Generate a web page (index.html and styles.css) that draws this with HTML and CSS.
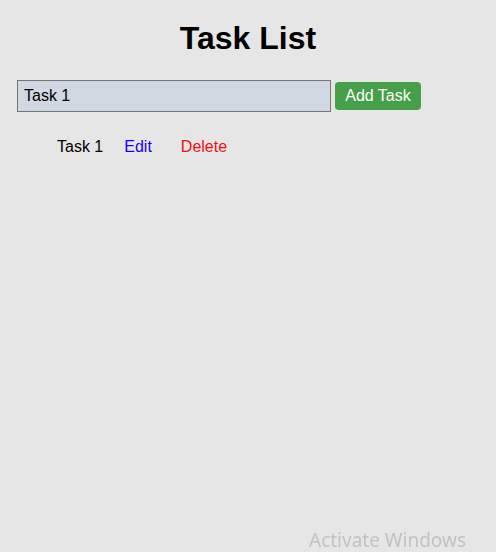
FILE: index.html
```html
<!DOCTYPE html>
<html>
<head>
<meta charset="utf-8">
<link rel="stylesheet" href="styles.css">
</head>
<body>
<div class="app">
  <h1 class="title">Task List</h1>
  <div class="form">
    <input class="task-input" type="text" value="Task 1">
    <button class="add-btn">Add Task</button>
  </div>
  <ul class="tasks">
    <li class="task">
      <span class="task-name">Task 1</span>
      <span class="edit">Edit</span>
      <span class="delete">Delete</span>
    </li>
  </ul>
</div>
<div class="watermark">Activate Windows</div>
</body>
</html>
```
FILE: styles.css
```css
html, body {
  margin: 0;
  padding: 0;
  background: #e6e6e6;
  font-family: "Liberation Sans", Arial, sans-serif;
  height: 100%;
}
.app {
  padding: 0 17px;
}
.title {
  margin: 20px 0 0;
  font-size: 32px;
  line-height: 37px;
  font-weight: bold;
  text-align: center;
  color: #000;
}
.form {
  display: flex;
  align-items: center;
  margin-top: 23px;
}
.task-input {
  box-sizing: border-box;
  width: 314px;
  height: 32px;
  border: 1px solid #767676;
  background: #d1d8e3;
  padding: 0 6px;
  font-family: "Liberation Sans", Arial, sans-serif;
  font-size: 16px;
  color: #000;
  margin: 0;
}
.add-btn {
  box-sizing: border-box;
  margin-left: 4px;
  height: 28px;
  width: 86px;
  padding: 0;
  border: none;
  border-radius: 4px;
  background: #45a049;
  color: #fff;
  font-family: "Liberation Sans", Arial, sans-serif;
  font-size: 16px;
}
.tasks {
  list-style: none;
  margin: 26px 0 0;
  padding-left: 40px;
}
.task {
  display: flex;
  align-items: center;
  font-size: 16px;
  line-height: 18px;
}
.task-name {
  color: #000;
}
.edit {
  color: #1a00f0;
  margin-left: 21px;
}
.delete {
  color: #f01010;
  margin-left: 29px;
}
.watermark {
  position: fixed;
  left: 309px;
  top: 531px;
  font-family: "Noto Sans", "Open Sans", sans-serif;
  font-size: 19px;
  line-height: 19px;
  color: #c2c2c2;
}
```
